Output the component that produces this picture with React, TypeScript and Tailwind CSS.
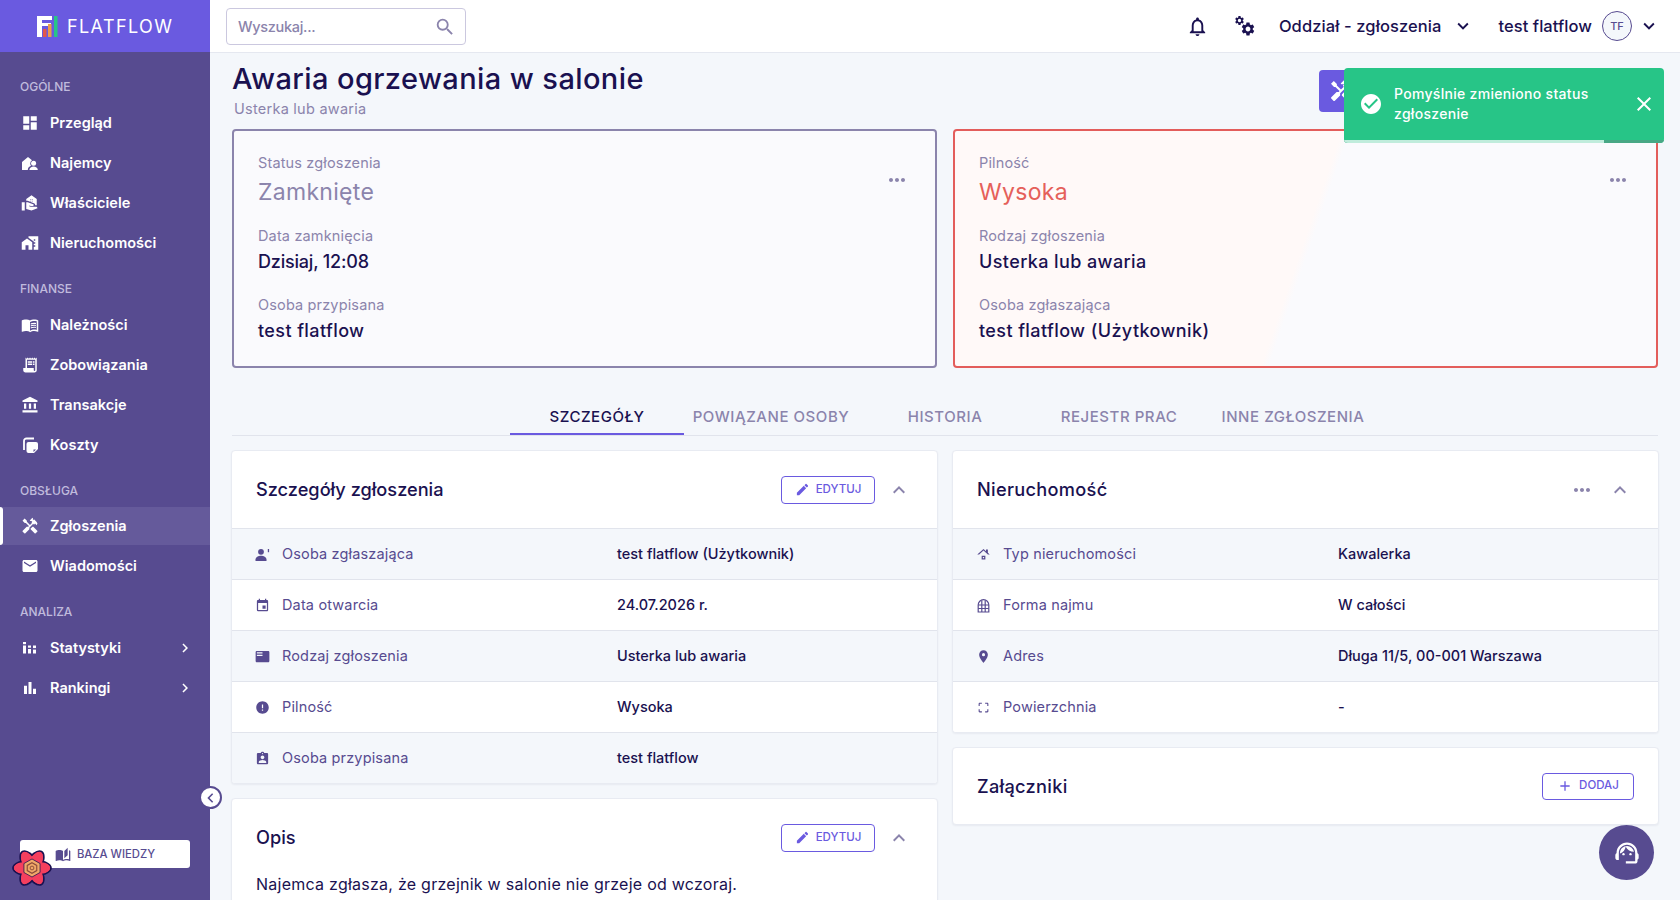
import React from "react";
import {
  MdDashboard, MdHomeWork, MdMenuBook, MdReceiptLong, MdAccountBalance, MdHandyman, MdEmail,
  MdBarChart, MdChevronRight, MdChevronLeft, MdEvent, MdFeaturedPlayList, MdError, MdAssignmentInd,
  MdRoofing, MdPlace, MdCropFree, MdEdit, MdExpandLess, MdExpandMore, MdMoreHoriz, MdAdd, MdNotificationsNone,
  MdSettings, MdSearch, MdCheckCircle, MdClose, MdSupportAgent, MdAutoStories, MdRealEstateAgent,
} from "react-icons/md";

const font = { fontFamily: "Inter, 'Noto Sans', sans-serif" };

function Logo() {
  return (
    <svg width="21" height="21" viewBox="0 0 21 21">
      <path d="M0 0h15v4H5v3h9v3H5v11H0z" fill="#fff" />
      <rect x="6" y="13" width="3.5" height="8" fill="#e2574c" />
      <rect x="11" y="8" width="3.5" height="13" fill="#ef9a4a" />
      <rect x="17" y="0" width="3.5" height="21" fill="#27c587" />
    </svg>
  );
}

function Gears() {
  return (
    <svg width="22" height="22" viewBox="0 0 22 22" fill="#1a1150">
      <MdSettings size={11} x={0} y={0} />
      <MdSettings size={16} x={6} y={6} />
    </svg>
  );
}

function TenantIcon() {
  return (
    <svg width="18" height="18" viewBox="0 0 18 18" fill="currentColor">
      <path d="M1 16V8l6-5 4 3.3A4 4 0 0 0 9.2 9.5c0 .9.3 1.6.8 2.2-1.8.7-3.2 2.2-3.2 4.3z" />
      <circle cx="12.6" cy="9.2" r="2.5" />
      <path d="M8.4 16c0-2 2.1-3.4 4.2-3.4s4.2 1.4 4.2 3.4z" />
    </svg>
  );
}

function CostIcon() {
  return (
    <svg width="18" height="18" viewBox="0 0 18 18" fill="currentColor">
      <path d="M3 14V5a2.5 2.5 0 0 1 2.5-2.5H13" fill="none" stroke="currentColor" strokeWidth="1.8" />
      <path d="M7.5 6H15a2 2 0 0 1 2 2v5l-4 4H7.5a2 2 0 0 1-2-2V8a2 2 0 0 1 2-2z" />
      <path d="M12.5 13.5h2.5l-2.5 2.5z" fill="#574b90" />
    </svg>
  );
}

function StatsIcon() {
  return (
    <svg width="18" height="18" viewBox="0 0 18 18" fill="currentColor">
      <rect x="2" y="3" width="3" height="2.2" />
      <rect x="2" y="6.5" width="3" height="8" />
      <rect x="7" y="6.5" width="3" height="2.2" />
      <rect x="7" y="10" width="3" height="4.5" />
      <rect x="12" y="6.5" width="3" height="2.6" />
      <rect x="12" y="10.6" width="3" height="3.9" />
    </svg>
  );
}

function PersonTick() {
  return (
    <svg width="15" height="15" viewBox="0 0 15 15" fill="currentColor">
      <circle cx="6" cy="4.8" r="2.9" />
      <path d="M.5 12.6C.5 10 3.4 8.7 6 8.7s5.5 1.3 5.5 3.9V14H.5z" />
      <rect x="12.8" y="2" width="1.3" height="3.2" />
    </svg>
  );
}

function ArchIcon() {
  return (
    <svg width="15" height="15" viewBox="0 0 15 15" fill="none" stroke="currentColor" strokeWidth="1.2">
      <path d="M2.2 14V7a5.3 5.3 0 0 1 10.6 0v7z" />
      <path d="M5.8 2.2V14M9.2 2.2V14M2.2 7h10.6M2.2 10.5h10.6" />
    </svg>
  );
}

function QueryLogo() {
  return (
    <svg width="40" height="38" viewBox="0 0 42 40">
      <g fill="#f43f5e" stroke="#1a1150" strokeWidth="1.8">
        <ellipse cx="21" cy="20" rx="20" ry="8.5" />
        <ellipse cx="21" cy="20" rx="20" ry="8.5" transform="rotate(60 21 20)" />
        <ellipse cx="21" cy="20" rx="20" ry="8.5" transform="rotate(120 21 20)" />
      </g>
      <g fill="#f43f5e">
        <ellipse cx="21" cy="20" rx="19" ry="7.5" />
        <ellipse cx="21" cy="20" rx="19" ry="7.5" transform="rotate(60 21 20)" />
        <ellipse cx="21" cy="20" rx="19" ry="7.5" transform="rotate(120 21 20)" />
      </g>
      <path d="M21 10.5l8.5 4.8v9.4L21 29.5l-8.5-4.8v-9.4z" fill="#f0a868" stroke="#1a1150" strokeWidth="0.8" />
      <path d="M21 14.5l5 2.8v5.4l-5 2.8-5-2.8v-5.4z" fill="none" stroke="#8a4b3a" strokeWidth="1.2" />
      <circle cx="21" cy="20" r="2" fill="none" stroke="#8a4b3a" strokeWidth="1" />
    </svg>
  );
}

function NavLabel({ children, cls }: { children: React.ReactNode; cls: string }) {
  return <div className={`h-4 pl-5 text-[12px] leading-4 font-medium text-[#c0bbdd] ${cls}`}>{children}</div>;
}

function NavItem({ icon, label, active, arrow }: { icon: React.ReactNode; label: string; active?: boolean; arrow?: boolean }) {
  return (
    <div className={`relative h-[38px] mb-[2px] flex items-center pl-[21px] pr-[16px] text-white ${active ? "bg-[#655a9b]" : ""}`}>
      {active && <div className="absolute left-0 top-0 bottom-0 w-[3px] bg-white rounded-r-sm" />}
      <span className="w-[29px] flex shrink-0">{icon}</span>
      <span className="text-[14.5px] font-semibold flex-1">{label}</span>
      {arrow && <MdChevronRight size={18} />}
    </div>
  );
}

function Sidebar() {
  const s = 18;
  return (
    <aside className="relative w-[210px] h-[900px] shrink-0 bg-[#574b90] flex flex-col">
      <div className="h-[52px] bg-[#6a5ae0] flex items-center pl-[37px] gap-[9px]">
        <Logo />
        <span className="text-[18px] tracking-[1.4px] font-normal text-white">FLATFLOW</span>
      </div>
      <nav className="pt-[27px] flex-1">
        <NavLabel cls="mb-[9px]">OGÓLNE</NavLabel>
        <NavItem icon={<MdDashboard size={s} />} label="Przegląd" />
        <NavItem icon={<TenantIcon />} label="Najemcy" />
        <NavItem icon={<MdRealEstateAgent size={s} />} label="Właściciele" />
        <NavItem icon={<MdHomeWork size={s} />} label="Nieruchomości" />
        <NavLabel cls="mt-[19px] mb-[9px]">FINANSE</NavLabel>
        <NavItem icon={<MdMenuBook size={s} />} label="Należności" />
        <NavItem icon={<MdReceiptLong size={s} />} label="Zobowiązania" />
        <NavItem icon={<MdAccountBalance size={s} />} label="Transakcje" />
        <NavItem icon={<CostIcon />} label="Koszty" />
        <NavLabel cls="mt-[19px] mb-[8px]">OBSŁUGA</NavLabel>
        <NavItem icon={<MdHandyman size={s} />} label="Zgłoszenia" active />
        <NavItem icon={<MdEmail size={s} />} label="Wiadomości" />
        <NavLabel cls="mt-[19px] mb-[9px]">ANALIZA</NavLabel>
        <NavItem icon={<StatsIcon />} label="Statystyki" arrow />
        <NavItem icon={<MdBarChart size={s} />} label="Rankingi" arrow />
      </nav>
      <div className="mx-5 mb-[32px] h-[28px] pt-px bg-white rounded-[3px] flex items-center justify-center gap-[6px] text-[#574b90] text-[11.3px] font-medium">
        <MdAutoStories size={16} />
        BAZA WIEDZY
      </div>
      <div className="absolute left-[12px] top-[849px]"><QueryLogo /></div>
      <div className="absolute left-[199px] top-[786px] w-[23px] h-[23px] rounded-full bg-white border-2 border-[#574b90] flex items-center justify-center text-[#574b90]">
        <MdChevronLeft size={20} />
      </div>
    </aside>
  );
}

function TopBar() {
  return (
    <header className="h-[53px] shrink-0 bg-white border-b border-[#e5e8f0] flex items-center pl-4 pr-[20px] text-[#1a1150]">
      <div className="mt-px w-[240px] h-[37px] border border-[#cbc8df] rounded-[4px] flex items-center justify-between pl-[11px] pr-[9px] text-[#8b84ac] text-[14.5px] tracking-[-0.3px] font-medium">
        <span>Wyszukaj...</span>
        <MdSearch size={22} />
      </div>
      <div className="flex-1" />
      <MdNotificationsNone size={23} className="mr-[25px] -ml-[1px]" />
      <Gears />
      <span className="ml-[23px] text-[16.5px] tracking-[0.1px] font-medium">Oddział - zgłoszenia</span>
      <MdExpandMore size={22} className="ml-[10px]" />
      <span className="ml-[25px] text-[16.5px] tracking-[0.05px] font-medium">test flatflow</span>
      <span className="ml-[10px] w-[30px] h-[30px] rounded-full border border-[#574b90] bg-[#f4f7fb] flex items-center justify-center text-[11px] font-medium text-[#574b90]">TF</span>
      <MdExpandMore size={22} className="ml-[6px]" />
    </header>
  );
}

function StatusField({ label, value, mt, labelMt, track = "tracking-[0.4px]" }: { label: string; value: string; mt: string; labelMt: string; track?: string }) {
  return (
    <>
      <div className={`text-[14.5px] leading-5 tracking-[0.15px] text-[#8b84ac] ${labelMt}`}>{label}</div>
      <div className={`text-[18px] leading-7 font-medium text-[#1a1150] ${track} ${mt}`}>{value}</div>
    </>
  );
}

function StatusCard({ border, bg, head, headColor, f1, f2, f1Track }: {
  border: string; bg: string; head: [string, string]; headColor: string; f1: [string, string]; f2: [string, string]; f1Track?: string;
}) {
  return (
    <div className={`h-[239px] border-2 rounded-[4px] pl-6 pr-[26px] pt-[22px] flex justify-between ${border} ${bg}`}>
      <div>
        <div className="text-[14.5px] leading-5 tracking-[0.15px] text-[#8b84ac]">{head[0]}</div>
        <div className={`mt-px text-[23px] leading-9 font-normal tracking-[0.3px] ${headColor}`}>{head[1]}</div>
        <StatusField label={f1[0]} value={f1[1]} labelMt="mt-4" mt="mt-[2px]" track={f1Track} />
        <StatusField label={f2[0]} value={f2[1]} labelMt="mt-[19px]" mt="mt-[2px]" />
      </div>
      <MdMoreHoriz size={24} className="mt-[15px] text-[#8b84ac]" />
    </div>
  );
}

function Tabs() {
  const tabs = ["SZCZEGÓŁY", "POWIĄZANE OSOBY", "HISTORIA", "REJESTR PRAC", "INNE ZGŁOSZENIA"];
  return (
    <div className="mt-[19px] h-[49px] border-b border-[#e1e4ec] flex justify-center">
      {tabs.map((t, i) => (
        <div key={t} className={`w-[174px] h-[48px] flex items-end justify-center text-[15px] leading-5 tracking-[0.55px] font-medium ${i === 0 ? "pb-[6px] text-[#1a1150] border-b-2 border-[#6a5ae0]" : "pb-[8px] text-[#8b84ac]"}`}>
          {t}
        </div>
      ))}
    </div>
  );
}

function OutlineButton({ icon, label, w, h }: { icon: React.ReactNode; label: string; w: string; h: string }) {
  return (
    <div className={`${w} ${h} border-[1.5px] border-[#6a5ae0] rounded-[4px] flex items-center justify-center gap-[6px] text-[#6a5ae0] text-[11.5px] font-medium`}>
      {icon}
      {label}
    </div>
  );
}

function CardHead({ title, right, h = "h-[77px]", pr = "pr-[26px]", track = "" }: { title: string; right: React.ReactNode; h?: string; pr?: string; track?: string }) {
  return (
    <div className={`${h} ${pr} flex items-center justify-between pl-[24px]`}>
      <span className={`mt-px text-[18.2px] font-medium text-[#1a1150] ${track}`}>{title}</span>
      <div className="flex items-center">{right}</div>
    </div>
  );
}

function Row({ icon, label, value, alt }: { icon: React.ReactNode; label: string; value: string; alt?: boolean }) {
  return (
    <div className={`h-[51px] border-t border-[#e1e4ec] flex items-center pl-[23px] text-[14.5px] ${alt ? "bg-[#f4f7fb]" : "bg-white"}`}>
      <span className="w-[27px] flex text-[#574b90]">{icon}</span>
      <span className="w-[335px] tracking-[0.15px] text-[#574b90]">{label}</span>
      <span className="font-medium text-[#1a1150]">{value}</span>
    </div>
  );
}

const cardCls = "bg-white rounded-[4px] border border-[#e8ebf2] shadow-[0_1px_2px_rgba(30,30,80,0.06)] overflow-hidden";

function EditActions() {
  return (
    <>
      <OutlineButton icon={<MdEdit size={15} />} label="EDYTUJ" w="w-[94px]" h="h-[28px]" />
      <MdExpandLess size={24} className="ml-[12px] text-[#8b84ac]" />
    </>
  );
}

export default function App() {
  const i = 15;
  return (
    <div style={font} className="w-[1680px] h-[900px] overflow-hidden flex bg-[#f4f7fb] relative">
      <Sidebar />
      <div className="flex-1 min-w-0 flex flex-col">
        <TopBar />
        <main className="px-[22px]">
          <div className="mt-[8px] flex justify-between">
            <div>
              <h1 className="text-[29px] leading-9 tracking-[0.4px] font-medium text-[#1a1150]">Awaria ogrzewania w salonie</h1>
              <div className="mt-[2px] -mb-px text-[14.5px] leading-5 tracking-[0.25px] text-[#8b84ac] pl-[2px]">Usterka lub awaria</div>
            </div>
            <div className="mr-[249px] w-[90px] h-[42px] bg-[#6a5ae0] rounded-[4px] flex items-center pl-[10px] text-white mt-[9px]">
              <MdHandyman size={24} />
            </div>
          </div>
          <div className="mt-[11px] grid grid-cols-2 gap-[16px]">
            <StatusCard border="border-[#8b84ac]" bg="bg-[#fafafd]" head={["Status zgłoszenia", "Zamknięte"]} headColor="text-[#8b84ac]"
              f1={["Data zamknięcia", "Dzisiaj, 12:08"]} f1Track="tracking-[-0.2px]" f2={["Osoba przypisana", "test flatflow"]} />
            <StatusCard border="border-[#e35d5b]" bg="bg-[linear-gradient(109deg,#fff9f8_49.5%,#fafafd_50.5%)]" head={["Pilność", "Wysoka"]} headColor="text-[#e5605a]"
              f1={["Rodzaj zgłoszenia", "Usterka lub awaria"]} f2={["Osoba zgłaszająca", "test flatflow (Użytkownik)"]} />
          </div>
          <Tabs />
          <div className="mt-[14px] -mx-px grid grid-cols-2 gap-[14px] items-start">
            <div className="flex flex-col gap-[14px]">
              <div className={cardCls}>
                <CardHead title="Szczegóły zgłoszenia" right={<EditActions />} />
                <Row alt icon={<PersonTick />} label="Osoba zgłaszająca" value="test flatflow (Użytkownik)" />
                <Row icon={<MdEvent size={i} />} label="Data otwarcia" value="24.07.2026 r." />
                <Row alt icon={<MdFeaturedPlayList size={i} />} label="Rodzaj zgłoszenia" value="Usterka lub awaria" />
                <Row icon={<MdError size={i} />} label="Pilność" value="Wysoka" />
                <Row alt icon={<MdAssignmentInd size={i} />} label="Osoba przypisana" value="test flatflow" />
              </div>
              <div className={cardCls}>
                <CardHead title="Opis" right={<EditActions />} />
                <p className="-mt-[4px] pb-6 pl-[24px] text-[16px] leading-6 tracking-[0.25px] font-normal text-[#1a1150]">Najemca zgłasza, że grzejnik w salonie nie grzeje od wczoraj.</p>
              </div>
            </div>
            <div className="flex flex-col gap-[14px]">
              <div className={cardCls}>
                <CardHead title="Nieruchomość" track="tracking-[0.3px]" right={<>
                  <MdMoreHoriz size={24} className="text-[#8b84ac]" />
                  <MdExpandLess size={24} className="ml-[14px] text-[#8b84ac]" />
                </>} />
                <Row alt icon={<MdRoofing size={i} />} label="Typ nieruchomości" value="Kawalerka" />
                <Row icon={<ArchIcon />} label="Forma najmu" value="W całości" />
                <Row alt icon={<MdPlace size={i} />} label="Adres" value="Długa 11/5, 00-001 Warszawa" />
                <Row icon={<MdCropFree size={13} className="ml-px" />} label="Powierzchnia" value="-" />
              </div>
              <div className={cardCls}>
                <CardHead title="Załączniki" track="tracking-[0.3px]" h="h-[76px]" pr="pr-[24px]" right={<OutlineButton icon={<MdAdd size={16} />} label="DODAJ" w="w-[92px]" h="h-[27px]" />} />
              </div>
            </div>
          </div>
        </main>
      </div>
      <div className="absolute left-[1344px] top-[68px] w-[320px] h-[75px] bg-[#27c587] rounded-[4px] overflow-hidden text-white flex items-center pl-[15px] pr-[8px] pb-[3px]">
        <MdCheckCircle size={24} className="shrink-0" />
        <span className="ml-[11px] flex-1 text-[14px] leading-5 tracking-[0.3px] font-medium">Pomyślnie zmieniono status zgłoszenie</span>
        <MdClose size={24} />
        <div className="absolute left-0 bottom-0 w-full h-[3px] bg-[#48a785]">
          <div className="w-[260px] h-full bg-[#c0ecdc]" />
        </div>
      </div>
      <div className="absolute left-[1599px] top-[825px] w-[55px] h-[55px] rounded-full bg-[#574b90] flex items-center justify-center text-white">
        <MdSupportAgent size={28} />
      </div>
    </div>
  );
}
